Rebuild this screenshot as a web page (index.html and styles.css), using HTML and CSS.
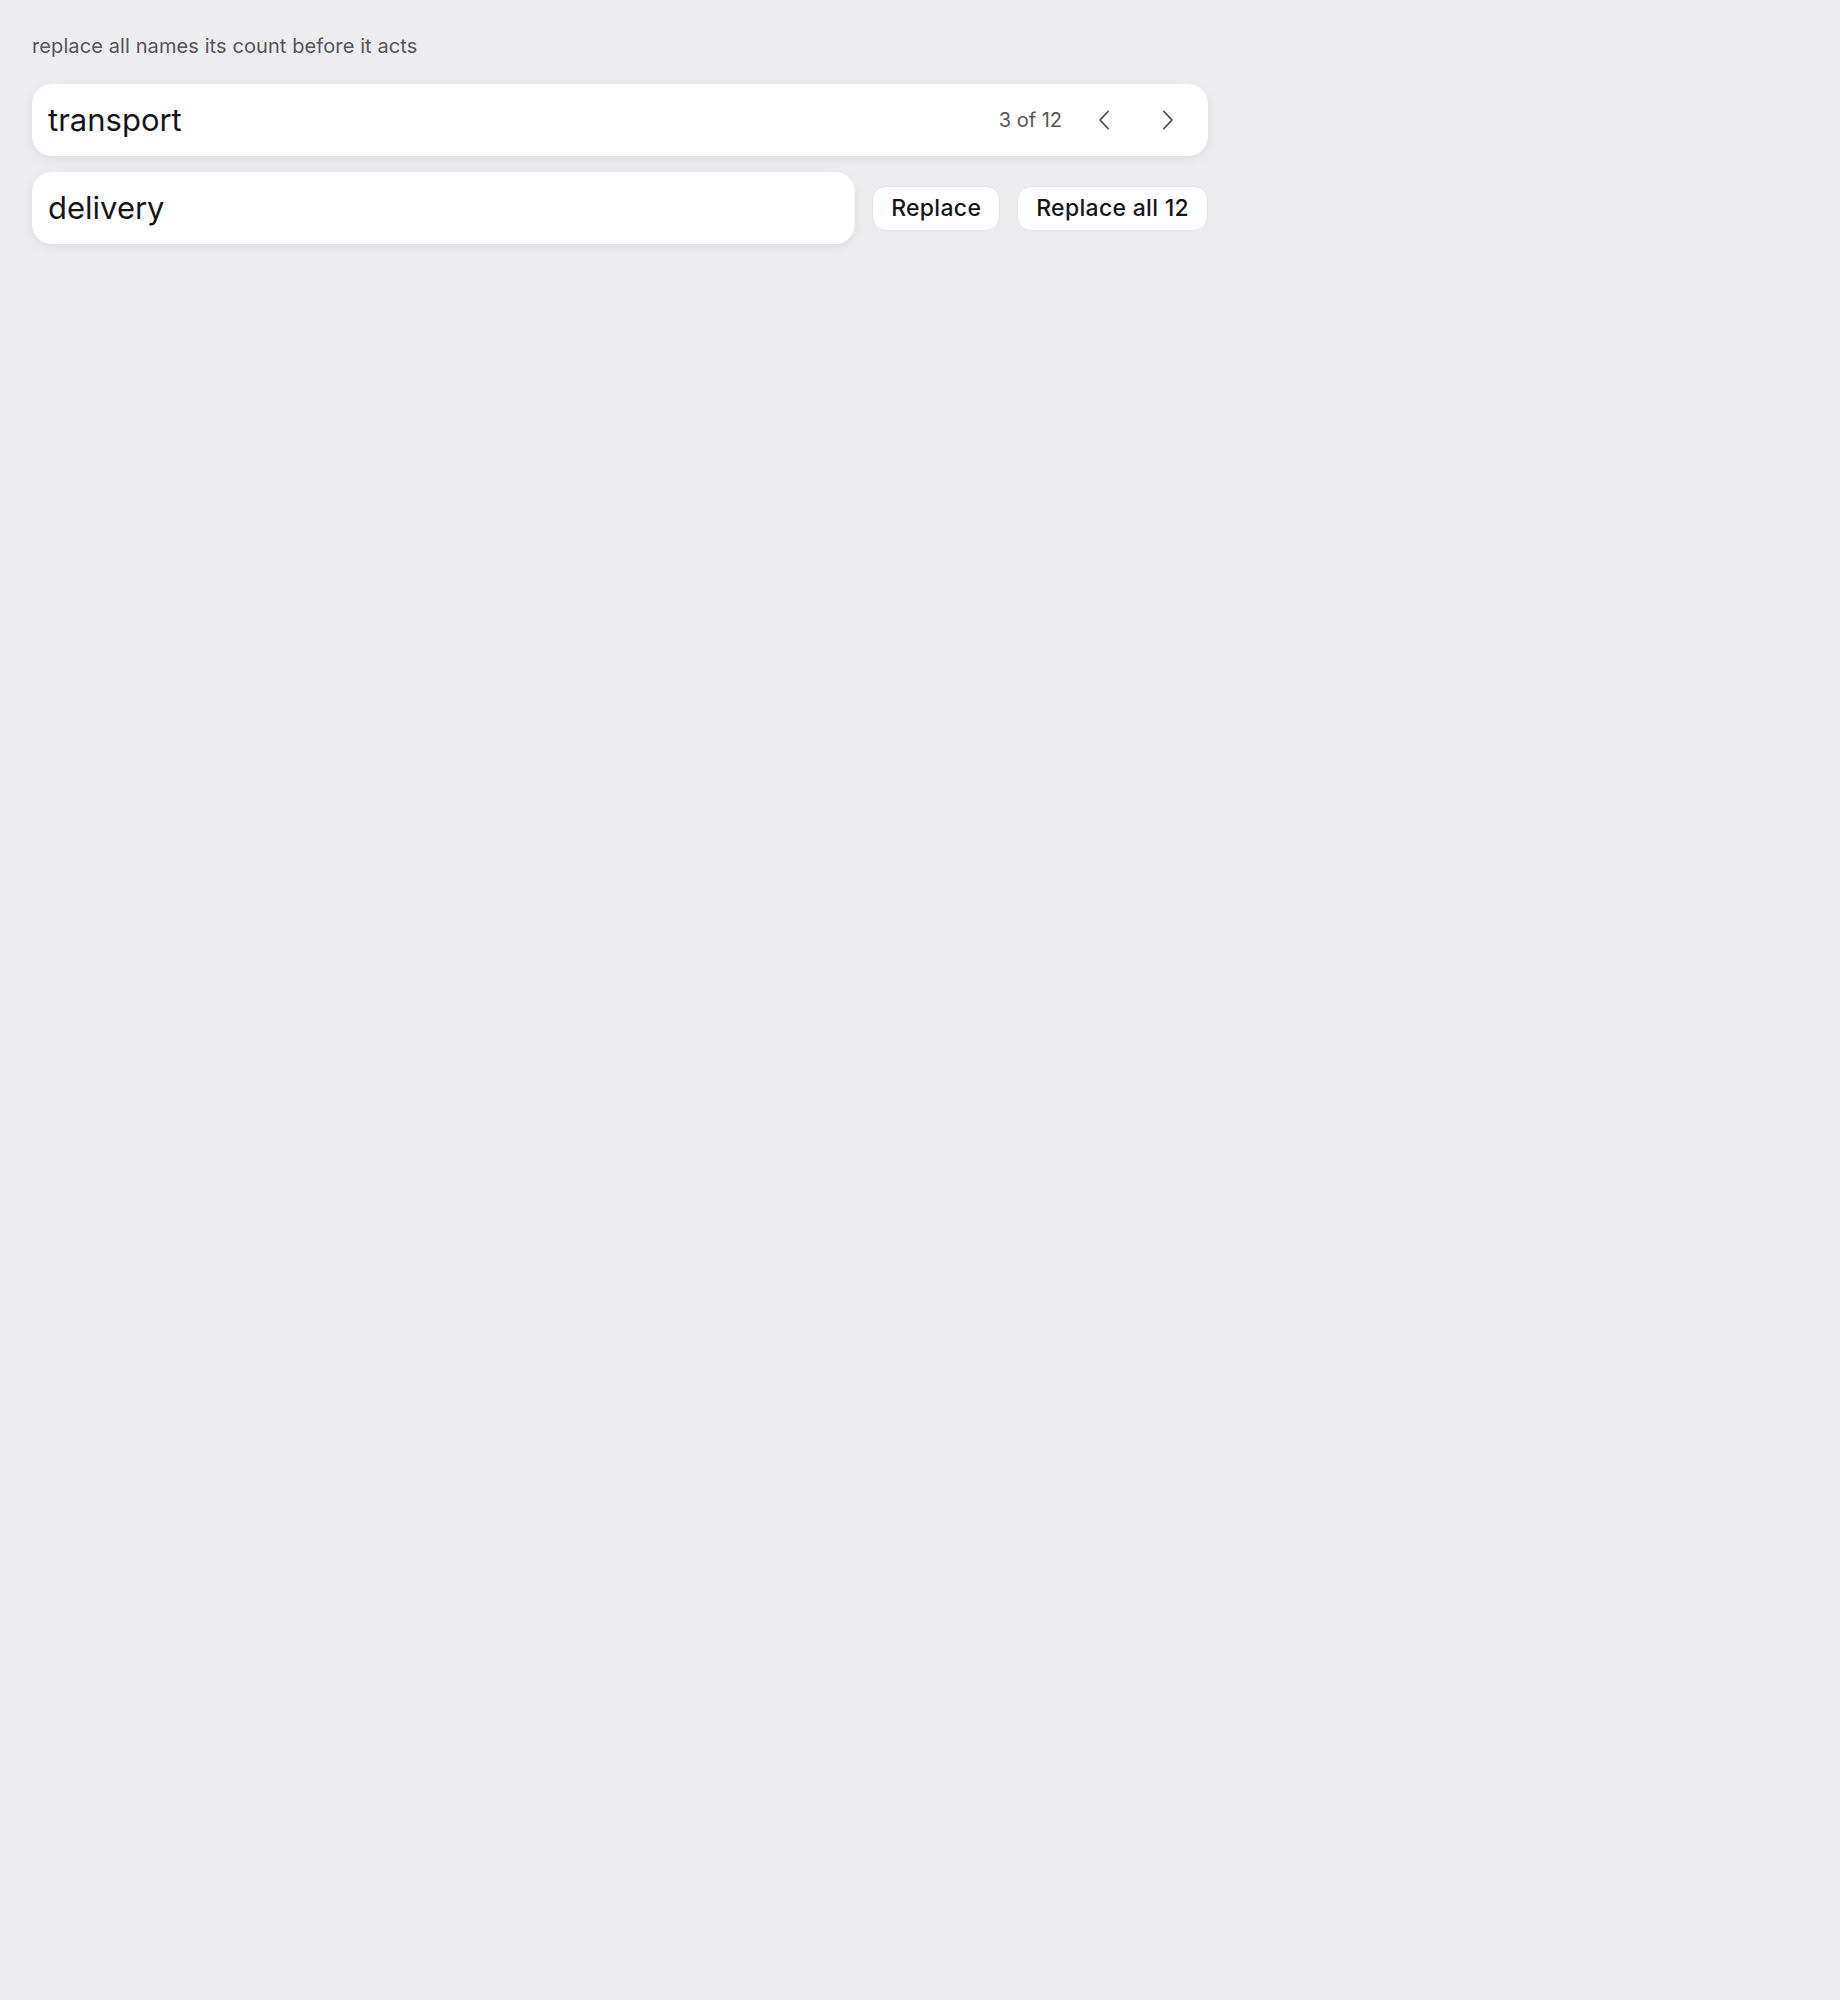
FILE: index.html
```
<!DOCTYPE html>
<html lang="en">
<head>
<meta charset="utf-8">
<title>Find and replace</title>
<link rel="stylesheet" href="styles.css">
</head>
<body>
<main class="panel">
  <p class="caption">replace all names its count before it acts</p>
  <div class="field field-find">
    <span class="field-text">transport</span>
    <div class="find-tools">
      <span class="count">3 of 12</span>
      <button class="icon-btn" aria-label="Previous match">
        <svg width="12" height="20" viewBox="0 0 12 20" fill="none" stroke="currentColor" stroke-width="1.8" stroke-linecap="round" stroke-linejoin="round"><path d="M10 1.5 L2 10 L10 18.5"/></svg>
      </button>
      <button class="icon-btn" aria-label="Next match">
        <svg width="12" height="20" viewBox="0 0 12 20" fill="none" stroke="currentColor" stroke-width="1.8" stroke-linecap="round" stroke-linejoin="round"><path d="M2 1.5 L10 10 L2 18.5"/></svg>
      </button>
    </div>
  </div>
  <div class="replace-row">
    <div class="field field-replace">
      <span class="field-text">delivery</span>
    </div>
    <button class="btn">Replace</button>
    <button class="btn">Replace all 12</button>
  </div>
</main>
</body>
</html>
```
FILE: styles.css
```
* { box-sizing: border-box; }
html, body {
  margin: 0;
  background: #ededf0;
}
body {
  font-family: Inter, "Noto Sans", "Liberation Sans", sans-serif;
  color: #16161a;
  padding: 32px;
}
.panel {
  width: 1176px;
  display: flex;
  flex-direction: column;
}
.caption {
  margin: 0 0 24px 0;
  font-size: 20px;
  line-height: 28px;
  color: #55555c;
  letter-spacing: 0.1px;
}
.field {
  height: 72px;
  background: #ffffff;
  border-radius: 20px;
  box-shadow: 0 3px 12px rgba(20, 20, 40, 0.07);
  display: flex;
  align-items: center;
  padding: 0 18px 0 16px;
}
.field-text {
  font-size: 31px;
  line-height: 36px;
  color: #16161a;
  flex: 1;
}
.find-tools {
  display: flex;
  align-items: center;
  gap: 20px;
}
.count {
  font-size: 20px;
  color: #55555c;
}
.icon-btn {
  width: 44px;
  height: 44px;
  border: none;
  background: transparent;
  color: #4a4a52;
  display: flex;
  align-items: center;
  justify-content: center;
  padding: 0;
}
.replace-row {
  margin-top: 16px;
  display: flex;
  align-items: center;
  gap: 17px;
}
.field-replace {
  flex: 1;
}
.btn {
  height: 45px;
  padding: 0 18px;
  background: #ffffff;
  border: 1px solid #e2e2e6;
  border-radius: 14px;
  font-family: Inter, "Noto Sans", "Liberation Sans", sans-serif;
  font-size: 23px;
  font-weight: 500;
  letter-spacing: 0.3px;
  color: #16161a;
}
```
